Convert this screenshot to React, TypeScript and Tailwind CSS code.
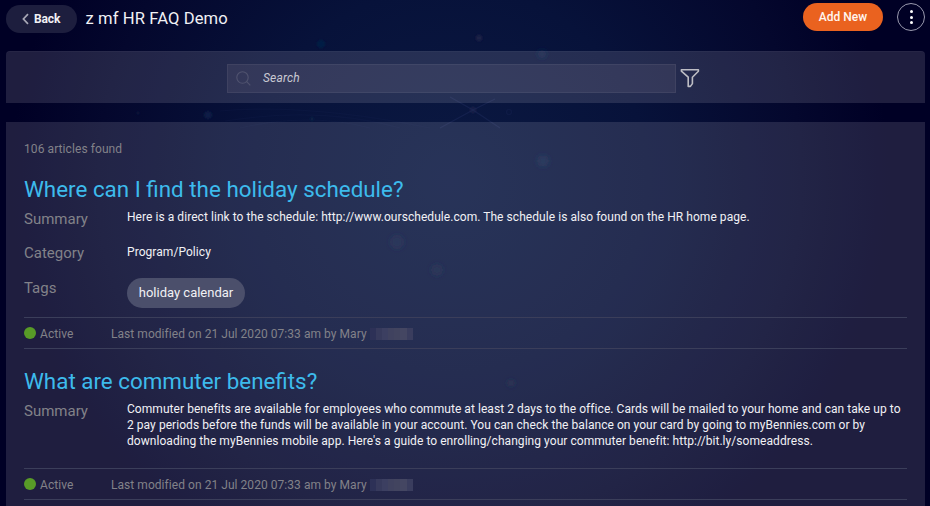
import type { ReactNode } from "react";

type Article = {
  title: string;
  summary: string[];
  category?: string;
  tags?: string[];
};

const articles: Article[] = [
  {
    title: "Where can I find the holiday schedule?",
    summary: [
      "Here is a direct link to the schedule: http://www.ourschedule.com. The schedule is also found on the HR home page.",
    ],
    category: "Program/Policy",
    tags: ["holiday calendar"],
  },
  {
    title: "What are commuter benefits?",
    summary: [
      "Commuter benefits are available for employees who commute at least 2 days to the office. Cards will be mailed to your home and can take up to",
      "2 pay periods before the funds will be available in your account. You can check the balance on your card by going to myBennies.com or by",
      "downloading the myBennies mobile app. Here's a guide to enrolling/changing your commuter benefit: http://bit.ly/someaddress.",
    ],
  },
];

function Backdrop() {
  return (
    <svg className="absolute inset-0 h-full w-full" viewBox="0 0 930 506" aria-hidden="true">
      <defs>
        <radialGradient id="glow" gradientUnits="userSpaceOnUse" cx="0" cy="0" r="1" gradientTransform="translate(450 180) scale(440 430)">
          <stop offset="0" stopColor="#0b1942" />
          <stop offset="0.45" stopColor="#07123a" />
          <stop offset="0.8" stopColor="#04072d" />
          <stop offset="1" stopColor="#000025" />
        </radialGradient>
        <filter id="soft" x="-1" y="-1" width="3" height="3">
          <feGaussianBlur stdDeviation="1" />
        </filter>
        <filter id="haze" x="-1" y="-1" width="3" height="3">
          <feGaussianBlur stdDeviation="2.5" />
        </filter>
      </defs>
      <rect width="930" height="506" fill="#000025" />
      <rect width="930" height="506" fill="url(#glow)" />
      <g filter="url(#soft)">
        <circle cx="479" cy="38" r="3.2" fill="#1a2047" />
        <circle cx="321" cy="44" r="4" fill="#061e44" />
        <circle cx="208" cy="115" r="3.8" fill="#0b1f46" />
        <circle cx="473" cy="110" r="3" fill="#1b2249" />
        <circle cx="138" cy="113" r="1.5" fill="#091a3d" />
        <circle cx="312" cy="119" r="1.5" fill="#0b2848" />
      </g>
      <g filter="url(#haze)">
        <circle cx="542" cy="54" r="4" fill="#102149" />
        <circle cx="543" cy="161" r="6" fill="#0a2148" />
        <circle cx="397" cy="242" r="7" fill="#101c45" />
        <circle cx="437" cy="270" r="6" fill="#0e1a42" />
        <circle cx="511" cy="383" r="4" fill="#09173c" />
      </g>
      <g fill="none" stroke="#1b2857" strokeWidth="1.2" opacity="0.6">
        <path d="M450 97 L473 110 L500 128 M495 99 L473 110 L440 128" />
        <circle cx="509" cy="112" r="2.5" opacity="0.5" />
        <path d="M220 111 Q310 103 430 128 M225 121 Q320 106 400 128 M240 128 Q310 112 370 128" opacity="0.25" />
      </g>
    </svg>
  );
}

function Field({ label, className, children }: { label: string; className: string; children: ReactNode }) {
  return (
    <div className={`flex items-start ${className}`}>
      <div className="w-[103px] shrink-0 text-[15px] leading-5 text-[#828289]">{label}</div>
      {children}
    </div>
  );
}

const mosaic = [
  "bg-[#2d3157]", "bg-[#373a5c]", "bg-[#3c3f61]", "bg-[#40425f]", "bg-[#42445f]", "bg-[#444662]", "bg-[#3a3d5e]",
];

function StatusBar() {
  return (
    <div className="flex h-8 items-center border-y border-[#3b3e5a] text-[12px] leading-4 tracking-[0.08px] text-[#828289]">
      <span className="size-[11.5px] shrink-0 rounded-full bg-[#589b27]" />
      <span className="ml-[4.5px] mt-px w-[71px] shrink-0">Active</span>
      <span className="mt-px shrink-0 whitespace-nowrap tracking-[0.05px]">Last modified on 21 Jul 2020 07:33 am by Mary</span>
      <span className="ml-[3px] mt-0.5 flex h-3 w-[43px] shrink-0 overflow-hidden">
        {mosaic.map((shade, i) => (
          <span key={i} className={`h-full flex-1 ${shade}`} />
        ))}
      </span>
    </div>
  );
}

function ArticleCard({ article }: { article: Article }) {
  return (
    <article className="pt-[18px]">
      <h2 className="h-7 whitespace-nowrap text-[22.4px] leading-7 text-[#3dbbec]">{article.title}</h2>
      <Field label="Summary" className={article.tags ? "h-[35px] pt-1.5" : "h-[73px] pt-1.5"}>
        <div className="text-[12px] leading-4 tracking-[0.055px] text-[#f1f1f5]">
          {article.summary.map((line) => (
            <p key={line} className="whitespace-nowrap">{line}</p>
          ))}
        </div>
      </Field>
      {article.category && (
        <Field label="Category" className="h-[35px] pt-[5px]">
          <p className="pt-px text-[12px] leading-4 tracking-[0.06px] text-[#f1f1f5]">{article.category}</p>
        </Field>
      )}
      {article.tags && (
        <Field label="Tags" className="h-11 pt-[5px]">
          {article.tags.map((tag) => (
            <span key={tag} className="flex h-[30px] w-[118px] items-center justify-center whitespace-nowrap rounded-full bg-[#4b4f6b] text-[13px] text-[#f1f1f5]">
              {tag}
            </span>
          ))}
        </Field>
      )}
      <StatusBar />
    </article>
  );
}

export default function App() {
  return (
    <div className="relative h-[506px] w-[930px] overflow-hidden bg-[#000025] font-['Roboto',sans-serif]">
      <Backdrop />
      <div className="relative flex h-full flex-col pl-1.5 pr-[5px]">
        <header className="flex h-[51px] shrink-0 items-start">
          <button className="mt-[5px] flex h-7 w-[71px] shrink-0 items-center rounded-full bg-[#1d1e3e] pl-4 text-[12px] font-bold tracking-[-0.15px] text-[#f1f1f5]">
            <svg className="mr-[5px] shrink-0" width="7" height="12" viewBox="0 0 7 12" fill="none" stroke="#a8a8b6" strokeWidth="1.7">
              <path d="M6 1.2 L1.4 6 L6 10.8" />
            </svg>
            <span className="-mt-px">Back</span>
          </button>
          <h1 className="ml-[8.5px] mt-[7px] whitespace-nowrap text-[16.6px] leading-6 tracking-[0.1px] text-[#f1f1f5]">z mf HR FAQ Demo</h1>
          <button className="ml-auto mt-[3px] h-7 w-20 rounded-full bg-[#ea621f] text-[12px] font-medium text-[#fff6f0]">Add New</button>
          <button className="ml-3.5 mt-[3px] flex size-7 flex-col items-center justify-center gap-[2.5px] rounded-full border border-[#9a9aae]">
            <span className="size-[3px] rounded-full bg-white" />
            <span className="size-[3px] rounded-full bg-white" />
            <span className="size-[3px] rounded-full bg-white" />
          </button>
        </header>

        <section className="flex h-[52px] shrink-0 items-start rounded-t border-t border-white/[0.03] bg-[#fff8ff]/[0.12] pl-[221px] pt-3">
          <div className="flex h-[29px] w-[449px] items-center border border-white/[0.06] bg-[#ffdce8]/[0.07] pl-2">
            <svg width="15" height="15" viewBox="0 0 15 15" fill="none" stroke="#50536f" strokeWidth="1.1">
              <circle cx="6.5" cy="6.5" r="5.7" />
              <path d="M10.7 10.7 L14.3 14.3" />
            </svg>
            <span className="ml-3 -mt-px text-[12px] italic tracking-[0.2px] text-[#c9c9d3]">Search</span>
          </div>
          <svg className="ml-1 mt-1" width="20" height="20" viewBox="0 0 20 20" fill="none" stroke="#bdbdc4" strokeWidth="1.6" strokeLinejoin="round">
            <path d="M1.4 1.8 H18.4 V3.2 L12.4 9.2 V15.6 L10.4 18.4 H8.2 V9.2 L1.4 3.2 Z" />
          </svg>
        </section>

        <main className="mt-[19px] flex-1 bg-[#fff8ff]/[0.12] pl-[18px] pr-[18px] pt-[17px]">
          <p className="h-[18px] pt-px text-[12px] leading-[18px] tracking-[0.08px] text-[#828289]">106 articles found</p>
          {articles.map((article) => (
            <ArticleCard key={article.title} article={article} />
          ))}
        </main>
      </div>
    </div>
  );
}
